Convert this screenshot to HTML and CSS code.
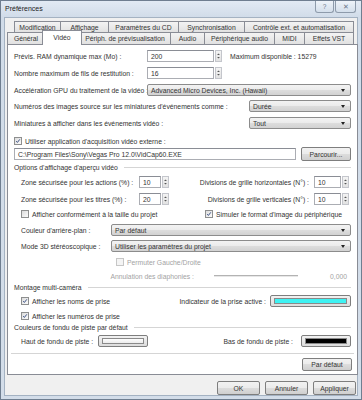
FILE: index.html
```html
<!DOCTYPE html>
<html lang="fr">
<head>
<meta charset="utf-8">
<title>Préférences</title>
<link rel="stylesheet" href="styles.css">
</head>
<body>
<div class="win">
  <div class="titlebar">
    <span class="title">Préférences</span>
    <div class="tbtns">
      <span class="tbtn">?</span>
      <span class="tbtn close">✕</span>
    </div>
  </div>
  <div class="client">
    <div class="tabrow back">
      <span class="tab t-mod">Modification</span>
      <span class="tab t-aff">Affichage</span>
      <span class="tab t-cd">Paramètres du CD</span>
      <span class="tab t-syn">Synchronisation</span>
      <span class="tab t-ctl">Contrôle ext. et automatisation</span>
    </div>
    <div class="tabrow front">
      <span class="tab t-gen">Général</span>
      <span class="tab t-vid sel">Vidéo</span>
      <span class="tab t-per">Périph. de prévisualisation</span>
      <span class="tab t-aud">Audio</span>
      <span class="tab t-pa">Périphérique audio</span>
      <span class="tab t-midi">MIDI</span>
      <span class="tab t-vst">Effets VST</span>
    </div>
    <div class="panel">
      <div class="row r1">
        <span class="lbl w133">Prévis. RAM dynamique max (Mo) :</span>
        <span class="edit w67">200</span>
        <span class="spin"><svg width="7" height="12" viewBox="0 0 7 12"><path d="M1.5 4.5 L3.5 2.5 L5.5 4.5Z M1.5 7.5 L3.5 9.5 L5.5 7.5Z" fill="#555"/></svg></span>
        <span class="note">Maximum disponible : 15279</span>
      </div>
      <div class="row r2">
        <span class="lbl w133">Nombre maximum de fils de restitution :</span>
        <span class="edit w67">16</span>
        <span class="spin"><svg width="7" height="12" viewBox="0 0 7 12"><path d="M1.5 4.5 L3.5 2.5 L5.5 4.5Z M1.5 7.5 L3.5 9.5 L5.5 7.5Z" fill="#555"/></svg></span>
      </div>
      <div class="row r3">
        <span class="lbl w133">Accélération GPU du traitement de la vidéo :</span>
        <span class="combo grow">Advanced Micro Devices, Inc. (Hawaii)<i class="arr"></i></span>
      </div>
      <div class="row r4">
        <span class="lbl w235">Numéros des images source sur les miniatures d'événements comme :</span>
        <span class="combo grow">Durée<i class="arr"></i></span>
      </div>
      <div class="row r5">
        <span class="lbl w235">Miniatures à afficher dans les événements vidéo :</span>
        <span class="combo grow">Tout<i class="arr"></i></span>
      </div>
      <div class="row r6">
        <span class="chk on"><svg width="8" height="8" viewBox="0 0 8 8"><path d="M1.6 4.2 L3.2 5.9 L6.4 1.8" fill="none" stroke="#3a4f84" stroke-width="1.3"/></svg></span>
        <span class="clbl">Utiliser application d'acquisition vidéo externe :</span>
      </div>
      <div class="row r7">
        <span class="edit path">C:\Program Files\Sony\Vegas Pro 12.0\VidCap60.EXE</span>
        <span class="btn browse">Parcourir...</span>
      </div>
      <div class="row grp g1">
        <span class="gtitle">Options d'affichage d'aperçu vidéo</span><span class="gline"></span>
      </div>
      <div class="row r9 ind">
        <span class="lbl w118">Zone sécurisée pour les actions (%) :</span>
        <span class="edit w22">10</span>
        <span class="spin"><svg width="7" height="12" viewBox="0 0 7 12"><path d="M1.5 4.5 L3.5 2.5 L5.5 4.5Z M1.5 7.5 L3.5 9.5 L5.5 7.5Z" fill="#555"/></svg></span>
        <span class="rgt">
          <span class="rlbl">Divisions de grille horizontales (N°) :</span>
          <span class="edit w27">10</span>
          <span class="spin"><svg width="7" height="12" viewBox="0 0 7 12"><path d="M1.5 4.5 L3.5 2.5 L5.5 4.5Z M1.5 7.5 L3.5 9.5 L5.5 7.5Z" fill="#555"/></svg></span>
        </span>
      </div>
      <div class="row r10 ind">
        <span class="lbl w118">Zone sécurisée pour les titres (%) :</span>
        <span class="edit w22">20</span>
        <span class="spin"><svg width="7" height="12" viewBox="0 0 7 12"><path d="M1.5 4.5 L3.5 2.5 L5.5 4.5Z M1.5 7.5 L3.5 9.5 L5.5 7.5Z" fill="#555"/></svg></span>
        <span class="rgt">
          <span class="rlbl">Divisions de grille verticales (N°) :</span>
          <span class="edit w27">10</span>
          <span class="spin"><svg width="7" height="12" viewBox="0 0 7 12"><path d="M1.5 4.5 L3.5 2.5 L5.5 4.5Z M1.5 7.5 L3.5 9.5 L5.5 7.5Z" fill="#555"/></svg></span>
        </span>
      </div>
      <div class="row r11 ind">
        <span class="half">
          <span class="chk"></span>
          <span class="clbl">Afficher conformément à la taille du projet</span>
        </span>
        <span class="chk on"><svg width="8" height="8" viewBox="0 0 8 8"><path d="M1.6 4.2 L3.2 5.9 L6.4 1.8" fill="none" stroke="#3a4f84" stroke-width="1.3"/></svg></span>
        <span class="clbl">Simuler le format d'image du périphérique</span>
      </div>
      <div class="row r12 ind">
        <span class="lbl w90">Couleur d'arrière-plan :</span>
        <span class="combo grow">Par défaut<i class="arr"></i></span>
      </div>
      <div class="row r13 ind">
        <span class="lbl w90">Mode 3D stéréoscopique :</span>
        <span class="combo grow">Utiliser les paramètres du projet<i class="arr"></i></span>
      </div>
      <div class="row r14 dis">
        <span class="chk off"></span>
        <span class="clbl">Permuter Gauche/Droite</span>
      </div>
      <div class="row r15 dis">
        <span class="xlbl">Annulation des diaphonies :</span>
        <span class="track"></span>
        <span class="val">0,000</span>
      </div>
      <div class="row grp g2">
        <span class="gtitle">Montage multi-caméra</span><span class="gline"></span>
      </div>
      <div class="row r17 ind">
        <span class="chk on"><svg width="8" height="8" viewBox="0 0 8 8"><path d="M1.6 4.2 L3.2 5.9 L6.4 1.8" fill="none" stroke="#3a4f84" stroke-width="1.3"/></svg></span>
        <span class="clbl">Afficher les noms de prise</span>
        <span class="rgt">
          <span class="rlbl">Indicateur de la prise active :</span>
          <span class="cbtn w81"><span class="sw cyan"></span></span>
        </span>
      </div>
      <div class="row r18 ind">
        <span class="chk on"><svg width="8" height="8" viewBox="0 0 8 8"><path d="M1.6 4.2 L3.2 5.9 L6.4 1.8" fill="none" stroke="#3a4f84" stroke-width="1.3"/></svg></span>
        <span class="clbl">Afficher les numéros de prise</span>
      </div>
      <div class="row grp g3">
        <span class="gtitle">Couleurs de fondu de piste par défaut</span><span class="gline"></span>
      </div>
      <div class="row r20 ind">
        <span class="lbl w77">Haut de fondu de piste :</span>
        <span class="cbtn w50"><span class="sw white"></span></span>
        <span class="rgt">
          <span class="rlbl">Bas de fondu de piste :</span>
          <span class="cbtn w50 gap8"><span class="sw black"></span></span>
        </span>
      </div>
      <div class="sep"></div>
      <div class="row r22">
        <span class="btn pd">Par défaut</span>
      </div>
    </div>
    <div class="actions">
      <span class="btn ok">OK</span>
      <span class="btn cancel">Annuler</span>
      <span class="btn apply">Appliquer</span>
    </div>
  </div>
</div>
</body>
</html>
```

FILE: styles.css
```css
* { box-sizing: border-box; margin: 0; padding: 0; }
html, body { width: 362px; height: 400px; overflow: hidden; }
body {
  font-family: "Liberation Sans", Arial, sans-serif;
  font-size: 6.8px;
  color: #333;
  background: #d6e0ec;
}
.win {
  width: 362px;
  height: 400px;
  border: 1px solid #6f7e90;
  background: linear-gradient(#e2eaf4, #d1dce9 16px, #d3dde9);
  display: flex;
  flex-direction: column;
  padding: 0 3px 3px 3px;
}
.titlebar {
  height: 16px;
  display: flex;
  justify-content: space-between;
  align-items: flex-start;
}
.title { padding: 4px 0 0 1px; font-size: 7px; color: #1c1c1c; }
.tbtns { display: flex; gap: 1px; margin-right: 2px; }
.tbtn {
  width: 19px;
  height: 12px;
  border: 1px solid #8e9bab;
  border-top: none;
  border-radius: 0 0 3px 3px;
  background: linear-gradient(#eef3f9, #d4dfeb);
  color: #6a7687;
  font-size: 6.5px;
  display: flex;
  align-items: center;
  justify-content: center;
}
.tbtn.close { width: 21px; }
.client {
  flex: 1;
  background: #f0f0f0;
  border: 1px solid #a4b2c2;
  padding: 3px 0 0 1px;
  display: flex;
  flex-direction: column;
}
.tabrow { display: flex; align-items: flex-end; }
.tabrow.back { height: 11px; margin-left: 8px; }
.tabrow.front { height: 12px; margin-left: 1px; }
.tab {
  height: 100%;
  border: 1px solid #898c95;
  border-bottom: none;
  margin-right: -1px;
  background: linear-gradient(#f3f3f3, #e1e1e1);
  display: flex;
  align-items: center;
  justify-content: center;
  white-space: nowrap;
  flex: none;
}
.t-mod { width: 47px; }
.t-aff { width: 49px; }
.t-cd { width: 71px; }
.t-syn { width: 67px; }
.t-ctl { width: 110px; }
.t-gen { width: 38px; }
.t-vid { width: 36px; }
.t-per { width: 92px; }
.t-aud { width: 35px; }
.t-pa { width: 71px; }
.t-midi { width: 31px; }
.t-vst { width: 50px; }
.tab.sel {
  position: relative;
  z-index: 2;
  background: #fff;
  height: 15px;
  width: 40px;
  margin: 0 -3px -1px -2px;
  padding-bottom: 2px;
}
.panel {
  width: 351px;
  height: 331px;
  margin-left: 1px;
  border: 1px solid #898c95;
  background: #fff;
  padding: 5px 6px 0 6px;
  display: flex;
  flex-direction: column;
}
.row { display: flex; align-items: center; height: 12px; flex: none; white-space: nowrap; }
.ind { padding-left: 7px; }
.r2, .r3, .r5, .r10 { margin-top: 5px; }
.r4 { margin-top: 4px; }
.r6 { margin-top: 6px; }
.r7 { height: 14px; }
.g1 { margin-top: 1px; height: 10px; }
.r9 { margin-top: 4px; }
.r11 { margin-top: 3px; }
.r12, .r13, .r14 { margin-top: 4px; }
.r15 { margin-top: 2px; }
.g2 { height: 10px; }
.r17, .r18, .r20 { margin-top: 3px; }
.g3 { height: 10px; }
.r22 { margin-top: 4px; height: 13px; justify-content: flex-end; margin-right: -1px; }
.lbl { flex: none; }
.w133 { width: 133px; }
.w235 { width: 235px; }
.w118 { width: 118px; }
.w90 { width: 90px; }
.w77 { width: 77px; }
.edit {
  height: 12px;
  border: 1px solid #abadb3;
  border-top-color: #8a8d95;
  background: #fff;
  padding-left: 3px;
  display: flex;
  align-items: center;
  flex: none;
}
.w67 { width: 67px; }
.w22 { width: 22px; }
.w27 { width: 27px; }
.spin {
  width: 7px;
  height: 12px;
  margin-left: 1px;
  flex: none;
  border: 1px solid #c4c6cc;
  background: linear-gradient(#f4f4f4, #e2e2e2);
  display: flex;
  align-items: center;
  justify-content: center;
}
.spin svg { display: block; }
.note { margin-left: 8px; }
.combo {
  height: 12px;
  border: 1px solid #8c8c8c;
  border-radius: 2px;
  background: linear-gradient(#f3f3f3 0, #ebebeb 50%, #dddddd 50%, #d2d2d2 100%);
  padding-left: 3px;
  display: flex;
  align-items: center;
  position: relative;
}
.grow { flex: 1; }
.arr {
  position: absolute;
  right: 5px;
  top: 4px;
  width: 0;
  height: 0;
  border-left: 2.5px solid transparent;
  border-right: 2.5px solid transparent;
  border-top: 3px solid #222;
}
.chk {
  width: 8px;
  height: 8px;
  flex: none;
  border: 1px solid #8e8f8f;
  background: linear-gradient(135deg, #dcdcdc, #fbfbfb);
  display: flex;
  align-items: center;
  justify-content: center;
}
.chk svg { display: block; }
.chk.off { border-color: #c6c6c6; background: #f4f4f4; }
.clbl { margin-left: 3px; }
.path { width: 282px; }
.btn {
  height: 14px;
  border: 1px solid #7e7e7e;
  border-radius: 2px;
  background: linear-gradient(#f2f2f2 0, #ebebeb 50%, #dddddd 50%, #cfcfcf 100%);
  display: flex;
  align-items: center;
  justify-content: center;
  flex: none;
}
.browse { width: 50px; margin-left: auto; }
.gline { flex: 1; height: 1px; background: #d5d5d5; margin-left: 6px; }
.rgt { margin-left: auto; display: flex; align-items: center; padding-right: 2px; }
.rlbl { margin-right: 5px; }
.half { width: 184px; display: flex; align-items: center; flex: none; }
.r14 { padding-left: 102px; }
.dis { color: #a3a3a3; }
.xlbl { width: 180px; text-align: right; flex: none; }
.track {
  width: 84px;
  height: 2px;
  margin-left: 20px;
  border-top: 1px solid #b3b3b3;
  border-bottom: 1px solid #e7e7e7;
  flex: none;
}
.val { margin-left: auto; padding-right: 4px; }
.r17 .rgt { padding-right: 0; }
.r17 .rlbl { margin-right: 4px; }
.cbtn {
  height: 12px;
  border: 1px solid #7e7e7e;
  border-radius: 2px;
  background: linear-gradient(#f2f2f2, #dcdcdc);
  padding: 2px 3px;
  display: flex;
  flex: none;
}
.w81 { width: 81px; }
.w50 { width: 50px; }
.gap8 { margin-left: 3px; }
.r20 .rgt { padding-right: 0; }
.sw { flex: 1; border: 1px solid #8a8a8a; }
.cyan { background: #3ef2f2; }
.white { background: linear-gradient(#fdfdfd, #ececec); }
.black { background: #000; }
.sep { height: 1px; background: #d5d5d5; margin: 6px -3px 0 -3px; flex: none; }
.pd { width: 50px; height: 13px; }
.actions {
  display: flex;
  justify-content: flex-end;
  gap: 5px;
  margin-top: 6px;
  padding-right: 1px;
}
.ok, .cancel, .apply { width: 43px; }
```
